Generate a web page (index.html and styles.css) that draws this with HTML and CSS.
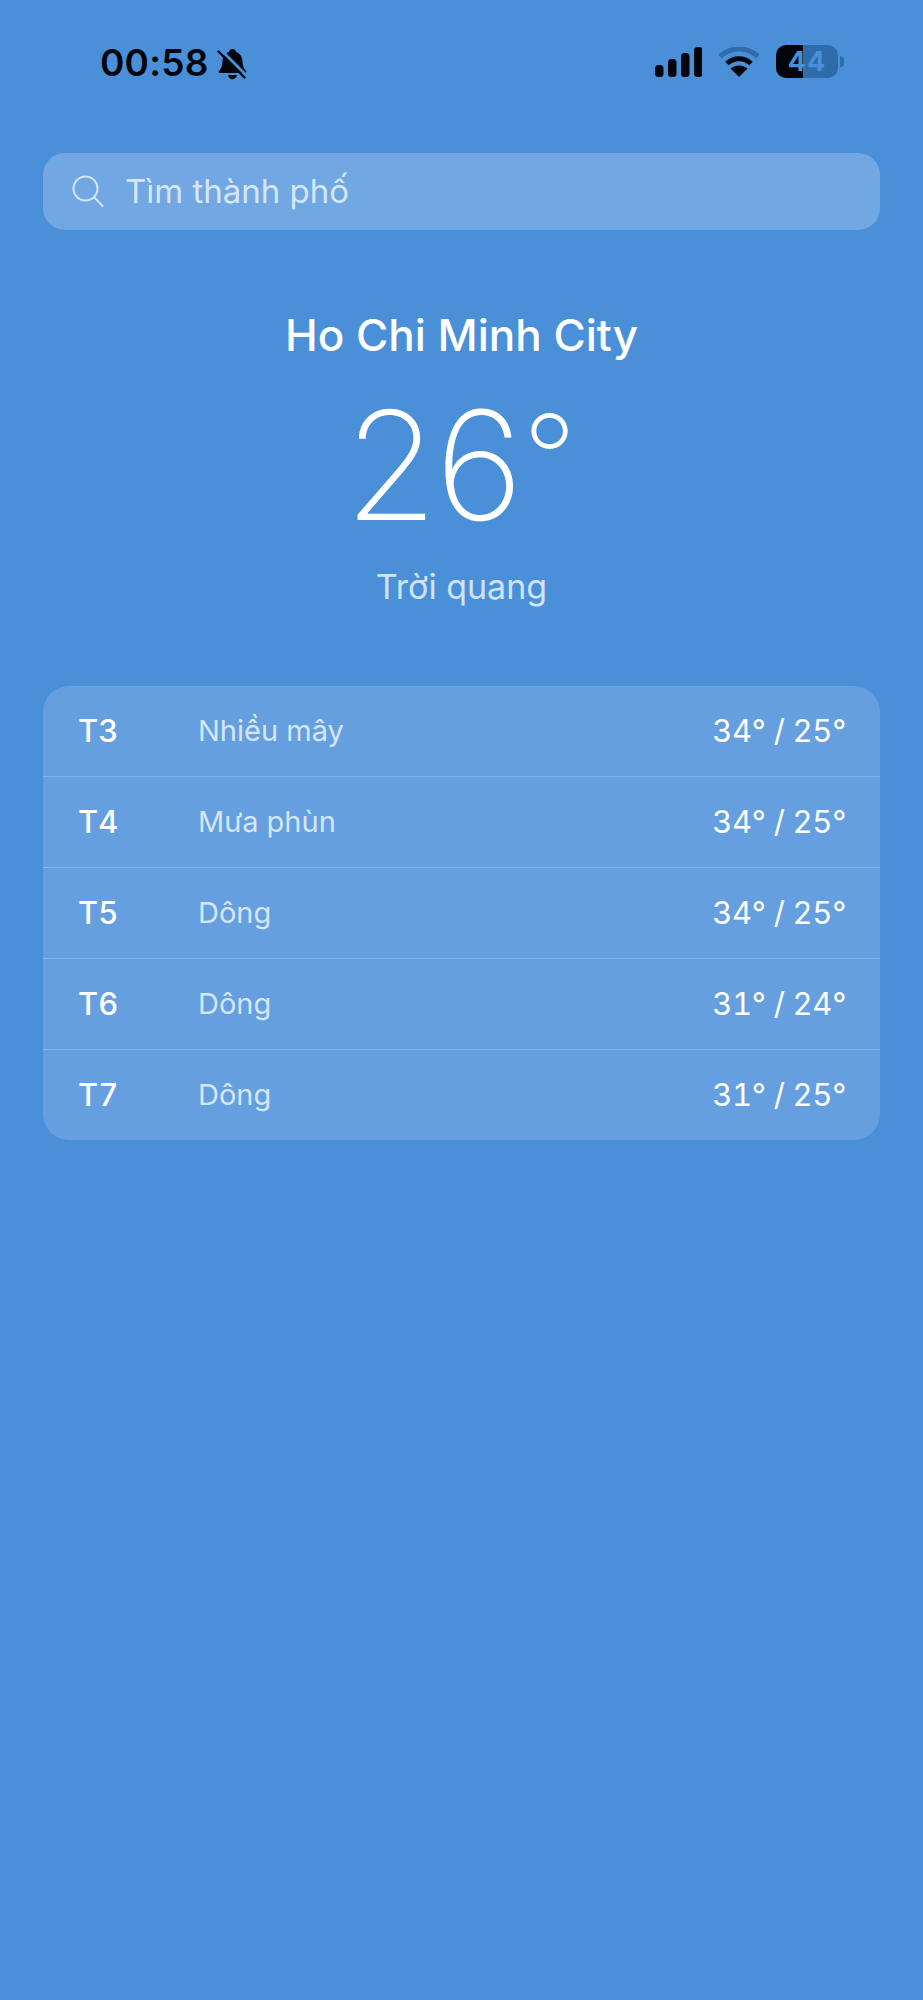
FILE: index.html
```html
<!DOCTYPE html>
<html lang="vi">
<head>
<meta charset="utf-8">
<title>Thời tiết</title>
<link rel="stylesheet" href="styles.css">
</head>
<body>
<main class="screen">
  <header class="status">
    <div class="status-left">
      <span class="time">00:58</span>
      <svg class="bell" width="31" height="32" viewBox="0 0 31 32">
        <path d="M15.5 1c2 0 3.2 1.3 3.500 3 4.300 1.300 6.300 5 6.500 9.500.2 4 .9 6.700 3.500 9.500.8.900.3 2-1 2H3c-1.300 0-1.800-1.100-1-2 2.600-2.800 3.300-5.500 3.500-9.500C5.700 9 7.700 5.300 12 4c.3-1.700 1.500-3 3.500-3z" fill="#02060c"/>
        <path d="M11 27h9c-.4 2.600-2.200 4.300-4.500 4.300S11.400 29.600 11 27z" fill="#02060c"/>
        <path d="M3 1l27 27" stroke="#4a90d9" stroke-width="3"/>
        <path d="M1.500 3.500l26 26" stroke="#02060c" stroke-width="2.400" stroke-linecap="round"/>
      </svg>
    </div>
    <div class="status-right">
      <svg class="signal" width="47" height="30" viewBox="0 0 47 30" fill="#02060c">
        <rect x="0" y="18" width="8.500" height="12" rx="3.500"/>
        <rect x="13" y="12" width="8.500" height="18" rx="3.500"/>
        <rect x="26" y="6" width="8.500" height="24" rx="3.500"/>
        <rect x="39" y="0" width="8.500" height="30" rx="3.500"/>
      </svg>
      <svg class="wifi" width="42" height="30" viewBox="0 0 42 30" fill="none">
        <path d="M2 9.500C12.500-.5 29.500-.5 40 9.500" stroke="#2f6cab" stroke-width="5"/>
        <path d="M9 16.500c7-6.300 17-6.300 24 0" stroke="#02060c" stroke-width="5"/>
        <path d="M21 30l-8.500-8.500c5-4 12-4 17 0z" fill="#02060c"/>
      </svg>
      <div class="battery">
        <div class="battery-body"><span class="battery-level"></span><span class="battery-text">44</span></div>
        <span class="battery-tip"></span>
      </div>
    </div>
  </header>

  <div class="search">
    <svg class="search-icon" width="32" height="32" viewBox="0 0 32 32" fill="none">
      <circle cx="13.500" cy="13.500" r="12" stroke="#d5e6f8" stroke-width="2"/>
      <path d="M22.500 22.500l8 8.500" stroke="#d5e6f8" stroke-width="2" stroke-linecap="round"/>
    </svg>
    <span class="search-text">Tìm thành phố</span>
  </div>

  <section class="current">
    <h1 class="city">Ho Chi Minh City</h1>
    <div class="temp">26<span class="deg">°</span></div>
    <div class="cond">Trời quang</div>
  </section>

  <section class="forecast">
    <div class="row"><span class="day">T3</span><span class="desc">Nhiều mây</span><span class="range">34° / 25°</span></div>
    <div class="row"><span class="day">T4</span><span class="desc">Mưa phùn</span><span class="range">34° / 25°</span></div>
    <div class="row"><span class="day">T5</span><span class="desc">Dông</span><span class="range">34° / 25°</span></div>
    <div class="row"><span class="day">T6</span><span class="desc">Dông</span><span class="range">31° / 24°</span></div>
    <div class="row"><span class="day">T7</span><span class="desc">Dông</span><span class="range">31° / 25°</span></div>
  </section>
</main>
</body>
</html>
```

FILE: styles.css
```css
* { box-sizing: border-box; }
html, body { margin: 0; padding: 0; }
body { background: #4a90d9; font-family: Inter, "Liberation Sans", sans-serif; }
.screen { height: 2000px; padding: 0 43px; overflow: hidden; }

.status { height: 153px; padding: 45px 36px 0 57px; display: flex; justify-content: space-between; align-items: flex-start; }
.status-left { display: flex; align-items: center; gap: 8px; height: 36px; }
.time { font-size: 37px; font-weight: 600; line-height: 36px; color: #02060c; letter-spacing: 0.2px; }
.bell { display: block; margin-top: 2px; }
.status-right { display: flex; align-items: flex-start; }
.signal { display: block; margin-top: 2px; }
.wifi { display: block; margin: 2px 16px 0 16px; }
.battery { display: flex; align-items: center; height: 33px; }
.battery-body { position: relative; width: 62px; height: 33px; border-radius: 10px; background: #2f6cab; overflow: hidden; display: flex; align-items: center; justify-content: center; }
.battery-level { position: absolute; left: 0; top: 0; bottom: 0; width: 27px; background: #02060c; }
.battery-text { position: relative; font-size: 27px; font-weight: 700; color: #4a90d9; letter-spacing: 1px; line-height: 33px; }
.battery-tip { width: 4px; height: 11px; margin-left: 2px; background: #2f6cab; border-radius: 0 4px 4px 0; }

.search { height: 77px; border-radius: 22px; background: #71a7e2; padding: 0 0 0 29px; display: flex; align-items: center; gap: 21px; }
.search-icon { display: block; margin-bottom: 1px; }
.search-text { font-size: 33px; font-weight: 400; color: #d5e6f8; line-height: 40px; margin-bottom: 2px; }

.current { display: flex; flex-direction: column; align-items: center; }
.city { margin: 77px 0 0; font-size: 44px; font-weight: 450; color: #fff; line-height: 56px; }
.temp { margin-top: 20px; margin-right: 2px; font-size: 151px; font-weight: 200; letter-spacing: -2.500px; color: #fff; line-height: 165px; }
.deg { font-size: 118px; line-height: 1px; vertical-align: 20px; letter-spacing: 0; margin-left: 2px; }
.cond { margin-top: 18px; font-size: 34px; font-weight: 400; color: #d0e3f7; line-height: 42px; }

.forecast { margin-top: 78px; border-radius: 26px; background: #659fdf; overflow: hidden; }
.row { height: 91px; padding: 0 34px 2px 35px; display: flex; align-items: center; border-top: 1px solid #84b3e6; }
.row:first-child { height: 90px; border-top: 0; }
.day { width: 120px; font-size: 31px; font-weight: 500; color: #fff; font-kerning: none; font-variant-numeric: tabular-nums; }
.desc { flex: 1; font-size: 29px; font-weight: 400; color: #d5e6f8; }
.range { font-size: 31px; font-weight: 400; color: #fff; font-variant-numeric: tabular-nums; letter-spacing: -0.300px; }
```
